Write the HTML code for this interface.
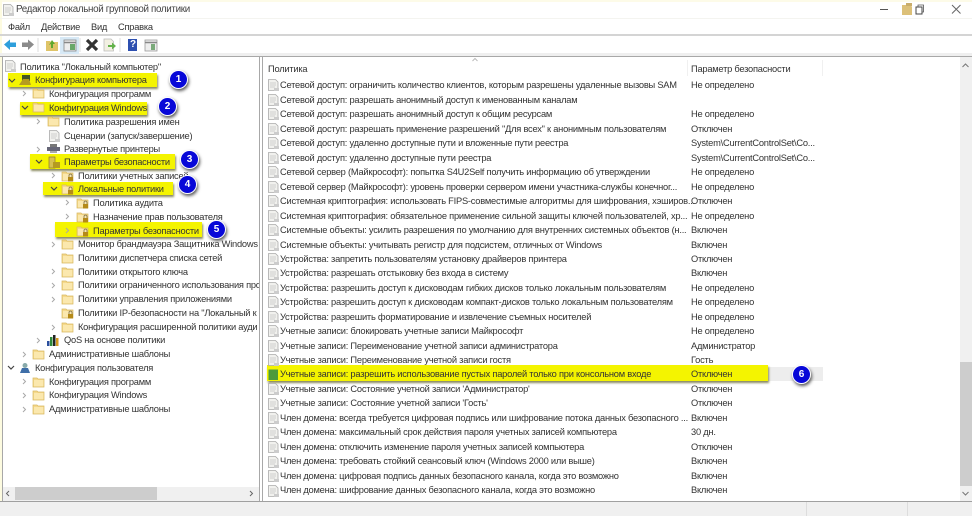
<!DOCTYPE html>
<html lang="ru"><head><meta charset="utf-8"><title>Редактор локальной групповой политики</title>
<style>
html,body{margin:0;padding:0;background:#fff}
#w{position:relative;width:972px;height:516px;overflow:hidden;background:#fff;font:9.3px "Liberation Sans",sans-serif;color:#333;filter:blur(.3px)}
#w div{position:absolute}
.t{white-space:nowrap;line-height:14px;height:14px;letter-spacing:-.23px}
.y{background:#f4f400;box-shadow:1px 2px 2px #8a8a60;height:14px}
.b{width:17px;height:17px;border-radius:50%;background:#0808d8;border:1px solid #fff;box-shadow:1px 2px 3px #555;color:#fff;font:bold 10px/17px "Liberation Sans",sans-serif;text-align:center}
svg{position:absolute;overflow:visible}
#tree{left:0;top:0;width:259px;height:487px;overflow:hidden}
</style></head><body><div id="w">
<svg width="0" height="0"><defs>
<g id="f"><path d="M0 2h4l1 1h6v8H0z" fill="#f5d98c" stroke="#d8b860" stroke-width=".7"/><rect x="1" y="4" width="9.5" height="6.5" fill="#fbe8ae"/></g>
<g id="l"><use href="#f"/><rect x="6" y="7" width="5" height="4.5" fill="#b58a18"/><path d="M7 7V5.6a1.5 1.5 0 0 1 3 0V7" fill="none" stroke="#8a7a50" stroke-width=".9"/></g>
<g id="d"><path d="M.5 .5h7l2.5 2.5v8.500H.5z" fill="#f1f1ee" stroke="#aaa" stroke-width=".8"/><path d="M2 4h6M2 6h6M2 8h5" stroke="#c5c5c5" stroke-width=".8"/><path d="M6 9h5v3H6z" fill="#ccc"/></g>
<g id="a"><path d="M0 0l2.500 2.500L0 5" fill="none" stroke="#a8a8a8" stroke-width="1"/></g>
<g id="o"><path d="M0 0l3 3 3-3" fill="none" stroke="#444" stroke-width="1.200"/></g>
</defs></svg>

<!-- frame -->
<div style="left:0;top:0;width:972px;height:2px;background:#fdfbe8"></div>
<div style="left:0;top:0;width:2px;height:516px;background:#fdfbe0"></div>
<div class="t" style="left:16px;top:3px;font-size:9.800px;letter-spacing:-.33px;color:#444">Редактор локальной групповой политики</div>
<svg style="left:3px;top:4px" width="12" height="12"><use href="#d"/></svg>
<div class="t" style="left:8px;top:20px">Файл</div>
<div class="t" style="left:41px;top:20px">Действие</div>
<div class="t" style="left:91px;top:20px">Вид</div>
<div class="t" style="left:118px;top:20px">Справка</div>
<div style="left:0;top:34px;width:972px;height:2px;background:#d4d4d4"></div>
<div style="left:0;top:18px;width:972px;height:1px;background:#f4f4f0"></div>
<div style="left:0;top:53px;width:972px;height:4px;background:#efefef;border-bottom:1px solid #a8a8a8;box-sizing:border-box"></div>

<!-- window buttons -->
<svg style="left:880px;top:3px" width="92" height="16">
<path d="M0 6.500h8" stroke="#555" stroke-width="1"/>
<path d="M22 2h9l1 2v8H22z" fill="#dcc078"/><path d="M26 0h6v3h-6z" fill="#c9ad6a"/>
<rect x="36" y="4" width="6" height="7" fill="none" stroke="#444" stroke-width="1"/><path d="M38 4V2h5.500v7H42" fill="none" stroke="#555" stroke-width=".8"/>
</svg>
<svg style="left:951px;top:4px" width="12" height="12"><path d="M1 1l8.500 8.500M9.500 1L1 9.500" stroke="#666" stroke-width="1" fill="none"/></svg>

<!-- toolbar -->
<svg style="left:0;top:36px" width="170" height="18">
<path d="M4 8.500l6-5v3h6v4.500h-6v3z" fill="#2e9fdc"/>
<path d="M34 8.500l-6-5v3h-6v4.500h6v3z" fill="#8b8b8b"/>
<path d="M38 2v14" stroke="#ddd"/>
<path d="M46 5h4l1 1h7v9H46z" fill="#dfc468"/><path d="M49 9l3-5 3 4h-2v4h-2V8z" fill="#5ea82e"/>
<rect x="60" y="1" width="19" height="17" fill="#d7e9f6"/>
<rect x="64" y="4" width="12" height="11" fill="#eee" stroke="#888" stroke-width=".8"/><path d="M64 6.500h12" stroke="#888" stroke-width="1.500"/><rect x="70" y="8" width="5" height="6" fill="#6aa86a"/>
<path d="M80 2v14" stroke="#ddd"/>
<path d="M87 4l10 10M97 4L87 14" stroke="#333" stroke-width="3.200"/>
<path d="M104 3h7l2.500 2.500V15H104z" fill="#f2f0e2" stroke="#bbb" stroke-width=".8"/><path d="M108 9h4V6.500l4 3.500-4 3.500V11h-4z" fill="#63b24a"/>
<path d="M120 2v14" stroke="#ddd"/>
<rect x="128" y="3" width="9" height="12" fill="#2d4fb0"/>
<rect x="145" y="4" width="12" height="11" fill="#eee" stroke="#999" stroke-width=".8"/><path d="M145 6.500h12" stroke="#888" stroke-width="1.500"/><rect x="151" y="8" width="4" height="6" fill="#7aaa7a"/>
</svg>
<div class="t" style="left:130px;top:38px;font:bold 10px/14px 'Liberation Sans',sans-serif;color:#fff">?</div>

<!-- panes -->
<div style="left:2px;top:57px;width:258px;height:445px;border:1px solid #a8a8a8;border-top:0;box-sizing:border-box;background:#fff"></div>
<div style="left:262px;top:57px;width:710px;height:445px;border-left:1px solid #a8a8a8;box-sizing:border-box;background:#fff"></div>
<div style="left:0;top:501px;width:972px;height:1px;background:#a0a0a0"></div>
<div style="left:0;top:502px;width:972px;height:14px;background:#f0f0f0"></div>
<div style="left:806px;top:502px;width:1px;height:14px;background:#ddd"></div>
<div style="left:907px;top:502px;width:1px;height:14px;background:#ddd"></div>

<!-- highlights -->
<div class="y" style="left:8px;top:73px;width:149px"></div>
<div class="y" style="left:20px;top:102px;width:127px;height:13px"></div>
<div class="y" style="left:30px;top:154px;width:145px;height:15px"></div>
<div class="y" style="left:43px;top:182px;width:130px;height:13px"></div>
<div class="y" style="left:55px;top:222px;width:147px;height:15px"></div>
<div style="left:768px;top:367px;width:55px;height:14px;background:#ededed"></div>
<div class="y" style="left:267px;top:365px;width:501px;height:16px"></div>

<!-- tree -->
<div id="tree">
<svg style="left:5px;top:60px" width="12" height="12"><use href="#d"/></svg><div class="t" style="left:20px;top:60px">Политика "Локальный компьютер"</div>
<svg style="left:9px;top:79px" width="7" height="5"><use href="#o"/></svg><svg style="left:19px;top:74px" width="13" height="12"><rect x="3" y="1" width="8" height="6" fill="#445528"/><path d="M0 11l4-6h6l2 6z" fill="#b59b20"/></svg><div class="t" style="left:35px;top:73px">Конфигурация компьютера</div>
<svg style="left:23px;top:91px" width="5" height="6"><use href="#a"/></svg><svg style="left:33px;top:87px" width="12" height="12"><use href="#f"/></svg><div class="t" style="left:49px;top:87px">Конфигурация программ</div>
<svg style="left:22px;top:106px" width="7" height="5"><use href="#o"/></svg><svg style="left:33px;top:101px" width="12" height="12"><use href="#f"/></svg><div class="t" style="left:49px;top:101px">Конфигурация Windows</div>
<svg style="left:37px;top:119px" width="5" height="6"><use href="#a"/></svg><svg style="left:48px;top:115px" width="12" height="12"><use href="#f"/></svg><div class="t" style="left:64px;top:115px">Политика разрешения имен</div>
<svg style="left:49px;top:130px" width="12" height="12"><use href="#d"/></svg><div class="t" style="left:64px;top:129px">Сценарии (запуск/завершение)</div>
<svg style="left:37px;top:147px" width="5" height="6"><use href="#a"/></svg><svg style="left:47px;top:144px" width="13" height="10"><rect x="3" y="0" width="7" height="3" fill="#777"/><rect x="0" y="3" width="13" height="4" fill="#667"/><rect x="3" y="7" width="7" height="2" fill="#aaa"/></svg><div class="t" style="left:64px;top:142px">Развернутые принтеры</div>
<svg style="left:36px;top:160px" width="7" height="5"><use href="#o"/></svg><svg style="left:48px;top:156px" width="13" height="13"><path d="M1 1h6v11H1z" fill="#d6c050" stroke="#8a7a30" stroke-width=".7"/><path d="M5 6h7v6H5z" fill="#b59a20"/></svg><div class="t" style="left:64px;top:155px">Параметры безопасности</div>
<svg style="left:52px;top:173px" width="5" height="6"><use href="#a"/></svg><svg style="left:62px;top:170px" width="12" height="12"><use href="#l"/></svg><div class="t" style="left:78px;top:169px">Политики учетных записей</div>
<svg style="left:51px;top:187px" width="7" height="5"><use href="#o"/></svg><svg style="left:62px;top:183px" width="12" height="12"><use href="#l"/></svg><div class="t" style="left:78px;top:182px">Локальные политики</div>
<svg style="left:66px;top:200px" width="5" height="6"><use href="#a"/></svg><svg style="left:77px;top:197px" width="12" height="12"><use href="#l"/></svg><div class="t" style="left:93px;top:196px">Политика аудита</div>
<svg style="left:66px;top:214px" width="5" height="6"><use href="#a"/></svg><svg style="left:77px;top:211px" width="12" height="12"><use href="#l"/></svg><div class="t" style="left:93px;top:210px">Назначение прав пользователя</div>
<svg style="left:66px;top:228px" width="5" height="6"><use href="#a"/></svg><svg style="left:77px;top:225px" width="12" height="12"><use href="#l"/></svg><div class="t" style="left:93px;top:224px">Параметры безопасности</div>
<svg style="left:52px;top:242px" width="5" height="6"><use href="#a"/></svg><svg style="left:62px;top:238px" width="12" height="12"><use href="#f"/></svg><div class="t" style="left:78px;top:237px">Монитор брандмауэра Защитника Windows</div>
<svg style="left:62px;top:252px" width="12" height="12"><use href="#f"/></svg><div class="t" style="left:78px;top:251px">Политики диспетчера списка сетей</div>
<svg style="left:52px;top:269px" width="5" height="6"><use href="#a"/></svg><svg style="left:62px;top:266px" width="12" height="12"><use href="#f"/></svg><div class="t" style="left:78px;top:265px">Политики открытого ключа</div>
<svg style="left:52px;top:283px" width="5" height="6"><use href="#a"/></svg><svg style="left:62px;top:279px" width="12" height="12"><use href="#f"/></svg><div class="t" style="left:78px;top:278px">Политики ограниченного использования программ</div>
<svg style="left:52px;top:297px" width="5" height="6"><use href="#a"/></svg><svg style="left:62px;top:293px" width="12" height="12"><use href="#f"/></svg><div class="t" style="left:78px;top:292px">Политики управления приложениями</div>
<svg style="left:62px;top:307px" width="12" height="12"><use href="#l"/></svg><div class="t" style="left:78px;top:306px">Политики IP-безопасности на "Локальный к</div>
<svg style="left:52px;top:325px" width="5" height="6"><use href="#a"/></svg><svg style="left:62px;top:321px" width="12" height="12"><use href="#f"/></svg><div class="t" style="left:78px;top:320px">Конфигурация расширенной политики ауди</div>
<svg style="left:37px;top:338px" width="5" height="6"><use href="#a"/></svg><svg style="left:47px;top:335px" width="14" height="11"><rect x="0" y="6" width="2.500" height="5" fill="#2b4f9e"/><rect x="3" y="2" width="2.500" height="9" fill="#2f8a3a"/><rect x="6" y="0" width="2.500" height="11" fill="#222"/><rect x="9" y="3" width="2.500" height="8" fill="#d59a20"/></svg><div class="t" style="left:64px;top:333px">QoS на основе политики</div>
<svg style="left:23px;top:352px" width="5" height="6"><use href="#a"/></svg><svg style="left:33px;top:348px" width="12" height="12"><use href="#f"/></svg><div class="t" style="left:49px;top:347px">Административные шаблоны</div>
<svg style="left:8px;top:366px" width="7" height="5"><use href="#o"/></svg><svg style="left:19px;top:362px" width="13" height="12"><circle cx="6" cy="3.500" r="2.500" fill="#8aa"/><path d="M1 11l2-5h6l2 5z" fill="#3f6fa8"/></svg><div class="t" style="left:35px;top:361px">Конфигурация пользователя</div>
<svg style="left:23px;top:379px" width="5" height="6"><use href="#a"/></svg><svg style="left:33px;top:376px" width="12" height="12"><use href="#f"/></svg><div class="t" style="left:49px;top:375px">Конфигурация программ</div>
<svg style="left:23px;top:393px" width="5" height="6"><use href="#a"/></svg><svg style="left:33px;top:389px" width="12" height="12"><use href="#f"/></svg><div class="t" style="left:49px;top:388px">Конфигурация Windows</div>
<svg style="left:23px;top:407px" width="5" height="6"><use href="#a"/></svg><svg style="left:33px;top:403px" width="12" height="12"><use href="#f"/></svg><div class="t" style="left:49px;top:402px">Административные шаблоны</div>
</div>

<!-- tree h-scrollbar -->
<div style="left:3px;top:487px;width:256px;height:14px;background:#f0f0f0"></div>
<div style="left:15px;top:487px;width:142px;height:13px;background:#cdcdcd"></div>
<svg style="left:6px;top:491px" width="5" height="6"><path d="M3 0L.5 2.500 3 5" fill="none" stroke="#666"/></svg>
<svg style="left:249px;top:491px" width="5" height="6"><path d="M1 0l2.500 2.500L1 5" fill="none" stroke="#666"/></svg>

<!-- right header -->
<div class="t" style="left:268px;top:62px">Политика</div>
<div class="t" style="left:691px;top:62px">Параметр безопасности</div>
<svg style="left:472px;top:58px" width="7" height="4"><path d="M.5 3L3 .5 5.500 3" fill="none" stroke="#bbb"/></svg>
<div style="left:687px;top:60px;width:1px;height:16px;background:#f0f0f0"></div>
<div style="left:822px;top:60px;width:1px;height:16px;background:#f0f0f0"></div>

<!-- right v-scrollbar -->
<div style="left:960px;top:57px;width:12px;height:444px;background:#f0f0f0"></div>
<div style="left:960px;top:362px;width:12px;height:124px;background:#cdcdcd"></div>
<svg style="left:962px;top:63px" width="7" height="5"><path d="M.5 4L3.500 1l3 3" fill="none" stroke="#777"/></svg>
<svg style="left:962px;top:491px" width="7" height="5"><path d="M.5 1l3 3 3-3" fill="none" stroke="#777"/></svg>

<!-- list -->
<svg style="left:268px;top:79px" width="12" height="12"><use href="#d"/></svg><div class="t" style="left:280px;top:78px">Сетевой доступ: ограничить количество клиентов, которым разрешены удаленные вызовы SAM</div><div class="t" style="left:691px;top:78px">Не определено</div>
<svg style="left:268px;top:94px" width="12" height="12"><use href="#d"/></svg><div class="t" style="left:280px;top:93px">Сетевой доступ: разрешать анонимный доступ к именованным каналам</div>
<svg style="left:268px;top:108px" width="12" height="12"><use href="#d"/></svg><div class="t" style="left:280px;top:107px">Сетевой доступ: разрешать анонимный доступ к общим ресурсам</div><div class="t" style="left:691px;top:107px">Не определено</div>
<svg style="left:268px;top:123px" width="12" height="12"><use href="#d"/></svg><div class="t" style="left:280px;top:122px">Сетевой доступ: разрешать применение разрешений "Для всех" к анонимным пользователям</div><div class="t" style="left:691px;top:122px">Отключен</div>
<svg style="left:268px;top:137px" width="12" height="12"><use href="#d"/></svg><div class="t" style="left:280px;top:136px">Сетевой доступ: удаленно доступные пути и вложенные пути реестра</div><div class="t" style="left:691px;top:136px">System\CurrentControlSet\Co...</div>
<svg style="left:268px;top:152px" width="12" height="12"><use href="#d"/></svg><div class="t" style="left:280px;top:151px">Сетевой доступ: удаленно доступные пути реестра</div><div class="t" style="left:691px;top:151px">System\CurrentControlSet\Co...</div>
<svg style="left:268px;top:166px" width="12" height="12"><use href="#d"/></svg><div class="t" style="left:280px;top:165px">Сетевой сервер (Майкрософт): попытка S4U2Self получить информацию об утверждении</div><div class="t" style="left:691px;top:165px">Не определено</div>
<svg style="left:268px;top:181px" width="12" height="12"><use href="#d"/></svg><div class="t" style="left:280px;top:180px">Сетевой сервер (Майкрософт): уровень проверки сервером имени участника-службы конечног...</div><div class="t" style="left:691px;top:180px">Не определено</div>
<svg style="left:268px;top:195px" width="12" height="12"><use href="#d"/></svg><div class="t" style="left:280px;top:194px">Системная криптография: использовать FIPS-совместимые алгоритмы для шифрования, хэширов...</div><div class="t" style="left:691px;top:194px">Отключен</div>
<svg style="left:268px;top:210px" width="12" height="12"><use href="#d"/></svg><div class="t" style="left:280px;top:209px">Системная криптография: обязательное применение сильной защиты ключей пользователей, хр...</div><div class="t" style="left:691px;top:209px">Не определено</div>
<svg style="left:268px;top:224px" width="12" height="12"><use href="#d"/></svg><div class="t" style="left:280px;top:223px">Системные объекты: усилить разрешения по умолчанию для внутренних системных объектов (н...</div><div class="t" style="left:691px;top:223px">Включен</div>
<svg style="left:268px;top:239px" width="12" height="12"><use href="#d"/></svg><div class="t" style="left:280px;top:238px">Системные объекты: учитывать регистр для подсистем, отличных от Windows</div><div class="t" style="left:691px;top:238px">Включен</div>
<svg style="left:268px;top:253px" width="12" height="12"><use href="#d"/></svg><div class="t" style="left:280px;top:252px">Устройства: запретить пользователям установку драйверов принтера</div><div class="t" style="left:691px;top:252px">Отключен</div>
<svg style="left:268px;top:268px" width="12" height="12"><use href="#d"/></svg><div class="t" style="left:280px;top:266px">Устройства: разрешать отстыковку без входа в систему</div><div class="t" style="left:691px;top:266px">Включен</div>
<svg style="left:268px;top:282px" width="12" height="12"><use href="#d"/></svg><div class="t" style="left:280px;top:281px">Устройства: разрешить доступ к дисководам гибких дисков только локальным пользователям</div><div class="t" style="left:691px;top:281px">Не определено</div>
<svg style="left:268px;top:296px" width="12" height="12"><use href="#d"/></svg><div class="t" style="left:280px;top:295px">Устройства: разрешить доступ к дисководам компакт-дисков только локальным пользователям</div><div class="t" style="left:691px;top:295px">Не определено</div>
<svg style="left:268px;top:311px" width="12" height="12"><use href="#d"/></svg><div class="t" style="left:280px;top:310px">Устройства: разрешить форматирование и извлечение съемных носителей</div><div class="t" style="left:691px;top:310px">Не определено</div>
<svg style="left:268px;top:325px" width="12" height="12"><use href="#d"/></svg><div class="t" style="left:280px;top:324px">Учетные записи: блокировать учетные записи Майкрософт</div><div class="t" style="left:691px;top:324px">Не определено</div>
<svg style="left:268px;top:340px" width="12" height="12"><use href="#d"/></svg><div class="t" style="left:280px;top:339px">Учетные записи: Переименование учетной записи администратора</div><div class="t" style="left:691px;top:339px">Администратор</div>
<svg style="left:268px;top:354px" width="12" height="12"><use href="#d"/></svg><div class="t" style="left:280px;top:353px">Учетные записи: Переименование учетной записи гостя</div><div class="t" style="left:691px;top:353px">Гость</div>
<svg style="left:268px;top:369px" width="12" height="12"><path d="M.5 .5h9.500v10.500H.5z" fill="#4c9a3c"/></svg><div class="t" style="left:280px;top:367px">Учетные записи: разрешить использование пустых паролей только при консольном входе</div><div class="t" style="left:691px;top:367px">Отключен</div>
<svg style="left:268px;top:383px" width="12" height="12"><use href="#d"/></svg><div class="t" style="left:280px;top:382px">Учетные записи: Состояние учетной записи 'Администратор'</div><div class="t" style="left:691px;top:382px">Отключен</div>
<svg style="left:268px;top:398px" width="12" height="12"><use href="#d"/></svg><div class="t" style="left:280px;top:396px">Учетные записи: Состояние учетной записи 'Гость'</div><div class="t" style="left:691px;top:396px">Отключен</div>
<svg style="left:268px;top:412px" width="12" height="12"><use href="#d"/></svg><div class="t" style="left:280px;top:411px">Член домена: всегда требуется цифровая подпись или шифрование потока данных безопасного ...</div><div class="t" style="left:691px;top:411px">Включен</div>
<svg style="left:268px;top:427px" width="12" height="12"><use href="#d"/></svg><div class="t" style="left:280px;top:425px">Член домена: максимальный срок действия пароля учетных записей компьютера</div><div class="t" style="left:691px;top:425px">30 дн.</div>
<svg style="left:268px;top:441px" width="12" height="12"><use href="#d"/></svg><div class="t" style="left:280px;top:440px">Член домена: отключить изменение пароля учетных записей компьютера</div><div class="t" style="left:691px;top:440px">Отключен</div>
<svg style="left:268px;top:456px" width="12" height="12"><use href="#d"/></svg><div class="t" style="left:280px;top:454px">Член домена: требовать стойкий сеансовый ключ (Windows 2000 или выше)</div><div class="t" style="left:691px;top:454px">Включен</div>
<svg style="left:268px;top:470px" width="12" height="12"><use href="#d"/></svg><div class="t" style="left:280px;top:469px">Член домена: цифровая подпись данных безопасного канала, когда это возможно</div><div class="t" style="left:691px;top:469px">Включен</div>
<svg style="left:268px;top:485px" width="12" height="12"><use href="#d"/></svg><div class="t" style="left:280px;top:483px">Член домена: шифрование данных безопасного канала, когда это возможно</div><div class="t" style="left:691px;top:483px">Включен</div>

<!-- badges -->
<div class="b" style="left:169px;top:70px">1</div>
<div class="b" style="left:158px;top:97px">2</div>
<div class="b" style="left:180px;top:150px">3</div>
<div class="b" style="left:178px;top:175px">4</div>
<div class="b" style="left:207px;top:220px">5</div>
<div class="b" style="left:792px;top:365px">6</div>
</div></body></html>
